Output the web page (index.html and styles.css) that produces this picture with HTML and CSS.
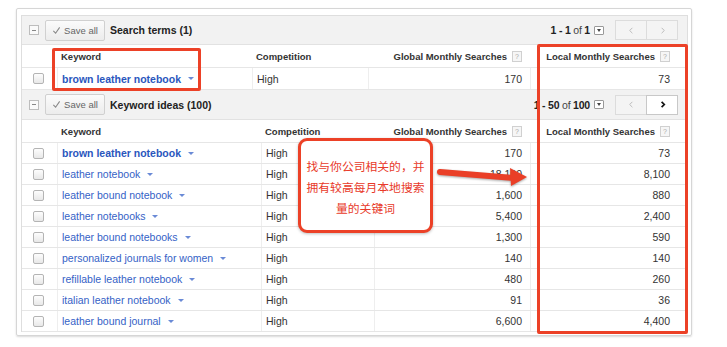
FILE: index.html
```html
<!DOCTYPE html>
<html lang="en">
<head>
    <meta charset="UTF-8">
    <meta name="viewport" content="width=device-width, initial-scale=1.0">
    <title>Keyword Tool</title>
    <link rel="stylesheet" href="styles.css">
</head>
<body>
<div class="page">
    <div class="frame">
        <div class="panel">

            <!-- search terms -->
            <div class="toolbar">
                <span class="collapse"></span>
                <span class="save-btn"><svg class="tick" viewBox="0 0 10 10"><path d="M1.5 5.5 L4 8 L8.5 1.5"/></svg>Save all</span>
                <span class="title">Search terms (1)</span>
                <div class="pager">
                    <span class="range"><b>1 - 1</b> of <b>1</b></span>
                    <span class="dd"></span>
                    <span class="nav">
                        <span class="nav-btn off"><svg viewBox="0 0 10 10"><path d="M6 2 L3 5 L6 8"/></svg></span>
                        <span class="nav-btn off"><svg viewBox="0 0 10 10"><path d="M4 2 L7 5 L4 8"/></svg></span>
                    </span>
                </div>
            </div>
            <div class="row head terms">
                <span></span>
                <span class="cell">Keyword</span>
                <span class="cell">Competition</span>
                <span class="cell num">Global Monthly Searches <i class="help">?</i></span>
                <span class="cell num last">Local Monthly Searches <i class="help">?</i></span>
            </div>
            <div class="row terms tall">
                <span class="cell"><i class="box"></i></span>
                <span class="cell"><a class="kw strong">brown leather notebook</a><i class="caret"></i></span>
                <span class="cell">High</span>
                <span class="cell num">170</span>
                <span class="cell num last">73</span>
            </div>

            <!-- keyword ideas -->
            <div class="toolbar second">
                <span class="collapse"></span>
                <span class="save-btn"><svg class="tick" viewBox="0 0 10 10"><path d="M1.5 5.5 L4 8 L8.5 1.5"/></svg>Save all</span>
                <span class="title">Keyword ideas (100)</span>
                <div class="pager">
                    <span class="range"><b>1 - 50</b> of <b>100</b></span>
                    <span class="dd"></span>
                    <span class="nav">
                        <span class="nav-btn off"><svg viewBox="0 0 10 10"><path d="M6 2 L3 5 L6 8"/></svg></span>
                        <span class="nav-btn on"><svg viewBox="0 0 10 10"><path d="M4 2 L7 5 L4 8"/></svg></span>
                    </span>
                </div>
            </div>
            <div class="row head ideas">
                <span></span>
                <span class="cell">Keyword</span>
                <span class="cell">Competition</span>
                <span class="cell num">Global Monthly Searches <i class="help">?</i></span>
                <span class="cell num last">Local Monthly Searches <i class="help">?</i></span>
            </div>
            <div class="row ideas">
                <span class="cell"><i class="box"></i></span>
                <span class="cell"><a class="kw strong">brown leather notebook</a><i class="caret"></i></span>
                <span class="cell">High</span><span class="cell num">170</span><span class="cell num last">73</span>
            </div>
            <div class="row ideas">
                <span class="cell"><i class="box"></i></span>
                <span class="cell"><a class="kw">leather notebook</a><i class="caret"></i></span>
                <span class="cell">High</span><span class="cell num">18,100</span><span class="cell num last">8,100</span>
            </div>
            <div class="row ideas">
                <span class="cell"><i class="box"></i></span>
                <span class="cell"><a class="kw">leather bound notebook</a><i class="caret"></i></span>
                <span class="cell">High</span><span class="cell num">1,600</span><span class="cell num last">880</span>
            </div>
            <div class="row ideas">
                <span class="cell"><i class="box"></i></span>
                <span class="cell"><a class="kw">leather notebooks</a><i class="caret"></i></span>
                <span class="cell">High</span><span class="cell num">5,400</span><span class="cell num last">2,400</span>
            </div>
            <div class="row ideas">
                <span class="cell"><i class="box"></i></span>
                <span class="cell"><a class="kw">leather bound notebooks</a><i class="caret"></i></span>
                <span class="cell">High</span><span class="cell num">1,300</span><span class="cell num last">590</span>
            </div>
            <div class="row ideas">
                <span class="cell"><i class="box"></i></span>
                <span class="cell"><a class="kw">personalized journals for women</a><i class="caret"></i></span>
                <span class="cell">High</span><span class="cell num">140</span><span class="cell num last">140</span>
            </div>
            <div class="row ideas">
                <span class="cell"><i class="box"></i></span>
                <span class="cell"><a class="kw">refillable leather notebook</a><i class="caret"></i></span>
                <span class="cell">High</span><span class="cell num">480</span><span class="cell num last">260</span>
            </div>
            <div class="row ideas">
                <span class="cell"><i class="box"></i></span>
                <span class="cell"><a class="kw">italian leather notebook</a><i class="caret"></i></span>
                <span class="cell">High</span><span class="cell num">91</span><span class="cell num last">36</span>
            </div>
            <div class="row ideas">
                <span class="cell"><i class="box"></i></span>
                <span class="cell"><a class="kw">leather bound journal</a><i class="caret"></i></span>
                <span class="cell">High</span><span class="cell num">6,600</span><span class="cell num last">4,400</span>
            </div>
        </div>
    </div>

    <!-- annotations drawn over the screenshot -->
    <div class="mark mark-keyword"></div>
    <div class="mark mark-local"></div>
    <div class="callout">找与你公司相关的，并<br>拥有较高每月本地搜索<br>量的关键词</div>
    <svg class="arrow" viewBox="0 0 105 30" width="105" height="30">
        <path class="shaft" d="M10 9 L84 15"/>
        <polygon class="head" points="80,5 97,14 81,23"/>
    </svg>
</div>
</body>
</html>
```

FILE: styles.css
```css
body {
    margin: 0;
    font-family: "Liberation Sans", Arial, sans-serif;
    background: #fff;
    color: #333;
}

.page {
    position: relative;
    width: 727px;
    height: 347px;
    padding: 8px 0 0 16px;
    box-sizing: border-box;
    overflow: hidden;
}

.frame {
    width: 676px;
    box-sizing: border-box;
    border: 1px solid #d6d6d6;
    border-radius: 2px;
    padding: 6px 3px 3px 4px;
    box-shadow: 0 1px 2px rgba(0, 0, 0, 0.15);
}

.panel {
    border: 1px solid #dedede;
    border-bottom: none;
}

/* toolbars */
.toolbar {
    display: flex;
    align-items: center;
    height: 29px;
    box-sizing: border-box;
    background: #f2f2f2;
    border-bottom: 1px solid #e2e2e2;
    padding: 0 9px 0 7px;
}
.toolbar.second {
    height: 30px;
}

.collapse {
    position: relative;
    width: 8px;
    height: 8px;
    border: 1px solid #bdbdbd;
    background: #fafafa;
}
.collapse::after {
    content: "";
    position: absolute;
    left: 2px;
    top: 3.5px;
    width: 4px;
    height: 1px;
    background: #888;
}

.save-btn {
    display: flex;
    align-items: center;
    justify-content: center;
    gap: 3px;
    width: 60px;
    height: 21px;
    box-sizing: border-box;
    margin-left: 6px;
    border: 1px solid #d0d0d0;
    border-radius: 2px;
    background: linear-gradient(#fbfbfb, #ececec);
    font-size: 9.5px;
    color: #666;
}
.tick {
    width: 9px;
    height: 9px;
    fill: none;
    stroke: #888;
    stroke-width: 1.2;
}

.title {
    margin-left: 5px;
    font-size: 10.5px;
    font-weight: bold;
    color: #222;
}

.pager {
    margin-left: auto;
    display: flex;
    align-items: center;
}
.range {
    font-size: 10.5px;
    color: #444;
    letter-spacing: -0.2px;
}
.range b {
    color: #222;
}
.dd {
    position: relative;
    width: 8px;
    height: 7px;
    margin-left: 4px;
    border: 1px solid #999;
    border-radius: 1px;
    background: #fff;
}
.dd::after {
    content: "";
    position: absolute;
    left: 2px;
    top: 2px;
    border-top: 3px solid #444;
    border-left: 2px solid transparent;
    border-right: 2px solid transparent;
}

.nav {
    display: flex;
    margin-left: 11px;
}
.nav-btn {
    display: flex;
    align-items: center;
    justify-content: center;
    width: 32px;
    height: 20px;
    box-sizing: border-box;
    border: 1px solid #dcdcdc;
    background: #f4f4f4;
}
.nav-btn + .nav-btn {
    margin-left: -1px;
}
.nav-btn svg {
    width: 9px;
    height: 9px;
    fill: none;
    stroke: #bbb;
    stroke-width: 1.1;
}
.nav-btn.on {
    background: #fff;
    border-color: #c8c8c8;
}
.nav-btn.on svg {
    stroke: #111;
    stroke-width: 1.9;
}

/* table rows */
.row {
    display: grid;
    height: 21px;
    box-sizing: border-box;
    border-bottom: 1px solid #e6e6e6;
    font-size: 10.5px;
}
.row.terms {
    grid-template-columns: 35px 195px 116px 162px 157px;
}
.row.ideas {
    grid-template-columns: 35px 204px 113px 156px 157px;
}
.row.tall {
    height: 22px;
}
.row.head {
    height: 23px;
    font-size: 9.5px;
    font-weight: bold;
    color: #333;
}

.cell {
    display: flex;
    align-items: center;
    padding: 0 4px;
    border-left: 1px solid #eeeeee;
    white-space: nowrap;
}
.row > :first-child {
    border-left: none;
    padding-left: 11px;
}
.row.head .cell {
    border-left: none;
}
.cell.num {
    justify-content: flex-end;
    padding-right: 8px;
}
.cell.last {
    padding-right: 17px;
}

.help {
    display: inline-block;
    width: 8px;
    height: 9px;
    margin-left: 5px;
    border: 1px solid #d0d0d0;
    background: #f6f6f6;
    font-style: normal;
    font-weight: normal;
    font-size: 7px;
    line-height: 9px;
    text-align: center;
    color: #aaa;
}

.box {
    width: 9px;
    height: 9px;
    border: 1px solid #b4b4b4;
    border-radius: 2px;
    background: linear-gradient(#fdfdfd, #e8e8e8);
}

.kw {
    color: #3562c6;
}
.kw.strong {
    font-weight: bold;
    color: #2a56bd;
}
.caret {
    margin-left: 7px;
    border-top: 3px solid #6a8ad6;
    border-left: 3px solid transparent;
    border-right: 3px solid transparent;
}

/* annotations */
.mark {
    position: absolute;
    box-sizing: border-box;
    border: 3px solid #ec4127;
    border-radius: 2px;
}
.mark-keyword {
    left: 52px;
    top: 48px;
    width: 149px;
    height: 43px;
}
.mark-local {
    left: 537px;
    top: 44px;
    width: 151px;
    height: 290px;
}

.callout {
    position: absolute;
    left: 298px;
    top: 138px;
    width: 135px;
    height: 95px;
    box-sizing: border-box;
    display: flex;
    align-items: center;
    justify-content: center;
    text-align: center;
    padding-top: 2px;
    border: 3px solid #ec4127;
    border-radius: 9px;
    background: #fff;
    box-shadow: 0 1px 3px rgba(0, 0, 0, 0.25);
    font-family: "Noto Sans CJK SC", sans-serif;
    font-size: 11.8px;
    line-height: 21px;
    color: #e83a2a;
}

.arrow {
    position: absolute;
    left: 430px;
    top: 163px;
    filter: drop-shadow(0 1px 1px rgba(0, 0, 0, 0.35));
}
.arrow .shaft {
    stroke: #ea3f27;
    stroke-width: 6;
    stroke-linecap: round;
}
.arrow .head {
    fill: #ea3f27;
}
```
